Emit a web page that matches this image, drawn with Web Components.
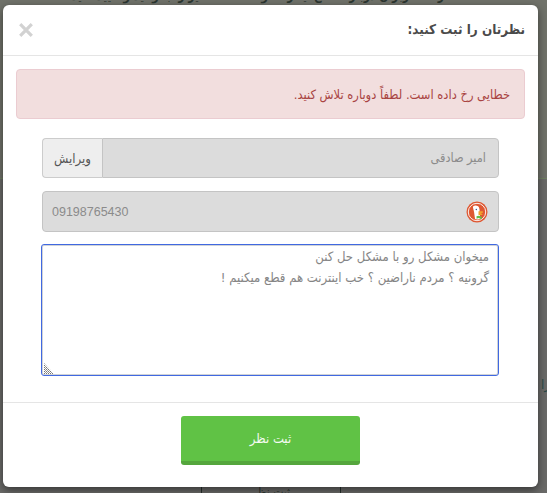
<!DOCTYPE html>
<html lang="fa" dir="rtl">
<head>
<meta charset="utf-8">
<title>ثبت نظر</title>
<style>
    html, body { height: 100%; }
    body {
        margin: 0;
        overflow: hidden;
        background: #6a6a68;
        font-family: "DejaVu Sans Condensed", "DejaVu Sans", sans-serif;
        font-stretch: condensed;
    }
</style>
</head>
<body>
<page-backdrop></page-backdrop>
<comment-modal>
    <span slot="title">نظرتان را ثبت کنید:</span>
    <alert-box>خطایی رخ داده است. لطفاً دوباره تلاش کنید.</alert-box>
    <form-field action="ویرایش">امیر صادقی</form-field>
    <form-field duck latin>09198765430</form-field>
    <comment-box>میخوان مشکل رو با مشکل حل کنن
گرونیه ؟ مردم ناراضین ؟ خب اینترنت هم قطع میکنیم !</comment-box>
    <green-button slot="footer">ثبت نظر</green-button>
</comment-modal>

<script>
class PageBackdrop extends HTMLElement {
    constructor() {
        super();
        this.attachShadow({ mode: "open" });
    }

    connectedCallback() {
        this.shadowRoot.innerHTML = `
        <style>
            :host {
                position: absolute;
                inset: 0;
                display: block;
                overflow: hidden;
                color: #2b3630;
                font-size: 12px;
            }
            .band { position: absolute; top: 0; left: 0; right: 0; height: 178px; background: #70726a; border-bottom: 1px solid #6f8062; }
            .top { position: absolute; top: -11px; right: 88px; white-space: nowrap; font-weight: 700; }
            .side { position: absolute; top: 377px; right: -3px; font-size: 13px; color: #2a4a48; }
            .ghost {
                position: absolute; top: 478px; left: 201px; width: 138px; height: 30px;
                border: 1px solid #26302c; text-align: center; padding-top: 6px;
            }
        </style>
        <div class="band"></div>
        <div class="top">نظرات کاربران درباره قطع اینترنت و مشکلات اخیر را بخوانید و تایید کنید</div>
        <div class="side">زا</div>
        <div class="ghost">ثبت نظر</div>
        `;
    }
}

class CommentModal extends HTMLElement {
    constructor() {
        super();
        this.attachShadow({ mode: "open" });
    }

    connectedCallback() {
        this.shadowRoot.innerHTML = `
        <style>
            :host {
                position: absolute;
                top: 5px;
                left: 3px;
                width: 535px;
                height: 482px;
                display: flex;
                flex-direction: column;
                background: #fff;
                border-radius: 6px;
                box-shadow: 0 3px 9px rgba(0, 0, 0, .5);
            }
            header {
                flex: none;
                display: flex;
                justify-content: space-between;
                align-items: center;
                padding: 0 13px 1px 16px;
                height: 49px;
                border-bottom: 1px solid #e5e5e5;
            }
            h4 {
                margin: 0;
                font-size: 13.4px;
                font-weight: 700;
                color: #4a4a4a;
            }
            .close { width: 14px; height: 14px; display: block; }
            .body {
                flex: 1;
                padding: 13px 13px 0;
                display: flex;
                flex-direction: column;
            }
            footer {
                height: 85px;
                flex: none;
                box-sizing: border-box;
                border-top: 1px solid #e5e5e5;
                padding-top: 13px;
                display: flex;
                justify-content: center;
            }
        </style>
        <header>
            <h4><slot name="title"></slot></h4>
            <svg class="close" viewBox="0 0 14 14"><path d="M1.200 1.200 12.800 12.800M12.800 1.200 1.200 12.800" stroke="#d2d2d2" stroke-width="3.200" fill="none"/></svg>
        </header>
        <div class="body"><slot></slot></div>
        <footer><slot name="footer"></slot></footer>
        `;
    }
}

class AlertBox extends HTMLElement {
    constructor() {
        super();
        this.attachShadow({ mode: "open" });
    }

    connectedCallback() {
        this.shadowRoot.innerHTML = `
        <style>
            :host {
                display: flex;
                align-items: center;
                box-sizing: border-box;
                height: 50px;
                margin-bottom: 19px;
                padding: 0 14px;
                background: #f2dede;
                border: 1px solid #ebccd1;
                border-radius: 4px;
                color: #a94442;
                font-size: 12.8px;
            }
        </style>
        <slot></slot>
        `;
    }
}

class FormField extends HTMLElement {
    constructor() {
        super();
        this.attachShadow({ mode: "open" });
    }

    connectedCallback() {
        const action = this.getAttribute("action");
        const duck = this.hasAttribute("duck");
        this.shadowRoot.innerHTML = `
        <style>
            :host {
                display: flex;
                height: 40px;
                margin: 0 26px 13px;
                box-sizing: border-box;
                font-size: 13px;
            }
            :host([latin]) { height: 41px; margin-bottom: 12px; }
            .input {
                flex: 1;
                display: flex;
                align-items: center;
                justify-content: space-between;
                padding: 0 12px;
                background: #dcdcdc;
                border: 1px solid #c4c4c4;
                border-radius: 4px;
                color: #8b8b8b;
            }
            :host([action]) .input { border-radius: 0 4px 4px 0; padding-bottom: 2px; box-sizing: border-box; font-size: 12.6px; }
            :host([latin]) .input { padding: 0 10px 0 9px; font-family: "Liberation Sans", sans-serif; font-size: 12.5px; font-stretch: normal; }
            .addon {
                width: 59px;
                display: flex;
                align-items: center;
                justify-content: center;
                background: #eee;
                border: 1px solid #ccc;
                border-right: 0;
                border-radius: 4px 0 0 4px;
                color: #555;
            }
            svg { width: 22px; height: 22px; display: block; }
        </style>
        <div class="input">
            ${duck ? `<svg viewBox="0 0 22 22">
                <circle cx="11" cy="11" r="10.500" fill="#de5833"/>
                <circle cx="11" cy="11" r="8.700" fill="none" stroke="#fff" stroke-width=".9"/>
                <path d="M7 5.500c2-1.600 5-1 6 1 .7 1.500.6 3 .6 5 0 2.400.5 4.500 1 6.200-2 .9-4 .9-5.500.3C8.500 15 8.300 12 7.800 9.800 7.500 8.200 6.800 6.900 7 5.500z" fill="#fff"/>
                <path d="M12.500 10.200h4.300l.3 1.300-2.300.9 1.800.5-.4 1.100h-3.700z" fill="#f2a02a"/>
                <path d="M10.500 15.300l2-.6 3.400 1-.3 2.200-3.200-1-1.800.8z" fill="#65bc46"/>
                <circle cx="10.300" cy="8.500" r=".7" fill="#2d4f8e"/>
            </svg>` : ""}
            <span><slot></slot></span>
        </div>
        ${action ? `<div class="addon">${action}</div>` : ""}
        `;
    }
}

class CommentBox extends HTMLElement {
    constructor() {
        super();
        this.attachShadow({ mode: "open" });
    }

    connectedCallback() {
        const text = this.textContent;
        this.shadowRoot.innerHTML = `
        <style>
            :host { display: block; position: relative; margin: 0 26px; }
            textarea {
                display: block;
                box-sizing: border-box;
                width: 458px;
                height: 132px;
                margin: 0;
                padding: 1px 9px 0 12px;
                border: 1px solid #4169e1;
                border-radius: 3px;
                outline: none;
                resize: none;
                background: #fff;
                color: #858585;
                font: 13px/21px "DejaVu Sans Condensed", "DejaVu Sans", sans-serif;
                font-stretch: condensed;
                box-shadow: inset 0 0 0 1px rgba(120, 130, 140, .35);
            }
            /* resize grip, sits over the bottom corner */
            svg { position: absolute; left: 2px; bottom: 2px; width: 10px; height: 11px; display: block; }
        </style>
        <textarea dir="rtl"></textarea>
        <svg viewBox="0 0 10 11">
            <defs>
                <pattern id="hatch" width="2" height="2" patternUnits="userSpaceOnUse">
                    <rect width="1" height="1" fill="#777"/>
                    <rect x="1" y="1" width="1" height="1" fill="#999"/>
                </pattern>
            </defs>
            <path d="M0 0 10 11H0z" fill="url(#hatch)"/>
        </svg>
        `;
        this.shadowRoot.querySelector("textarea").textContent = text;
    }
}

class GreenButton extends HTMLElement {
    constructor() {
        super();
        this.attachShadow({ mode: "open" });
    }

    connectedCallback() {
        this.shadowRoot.innerHTML = `
        <style>
            :host {
                display: flex;
                align-items: center;
                justify-content: center;
                box-sizing: border-box;
                width: 179px;
                height: 49px;
                background: #60c245;
                border-bottom: 4px solid #55a63d;
                border-radius: 3px;
                color: #f4fbf2;
                font-size: 13px;
            }
        </style>
        <slot></slot>
        `;
    }
}

customElements.define("page-backdrop", PageBackdrop);
customElements.define("comment-modal", CommentModal);
customElements.define("alert-box", AlertBox);
customElements.define("form-field", FormField);
customElements.define("comment-box", CommentBox);
customElements.define("green-button", GreenButton);
</script>
</body>
</html>
